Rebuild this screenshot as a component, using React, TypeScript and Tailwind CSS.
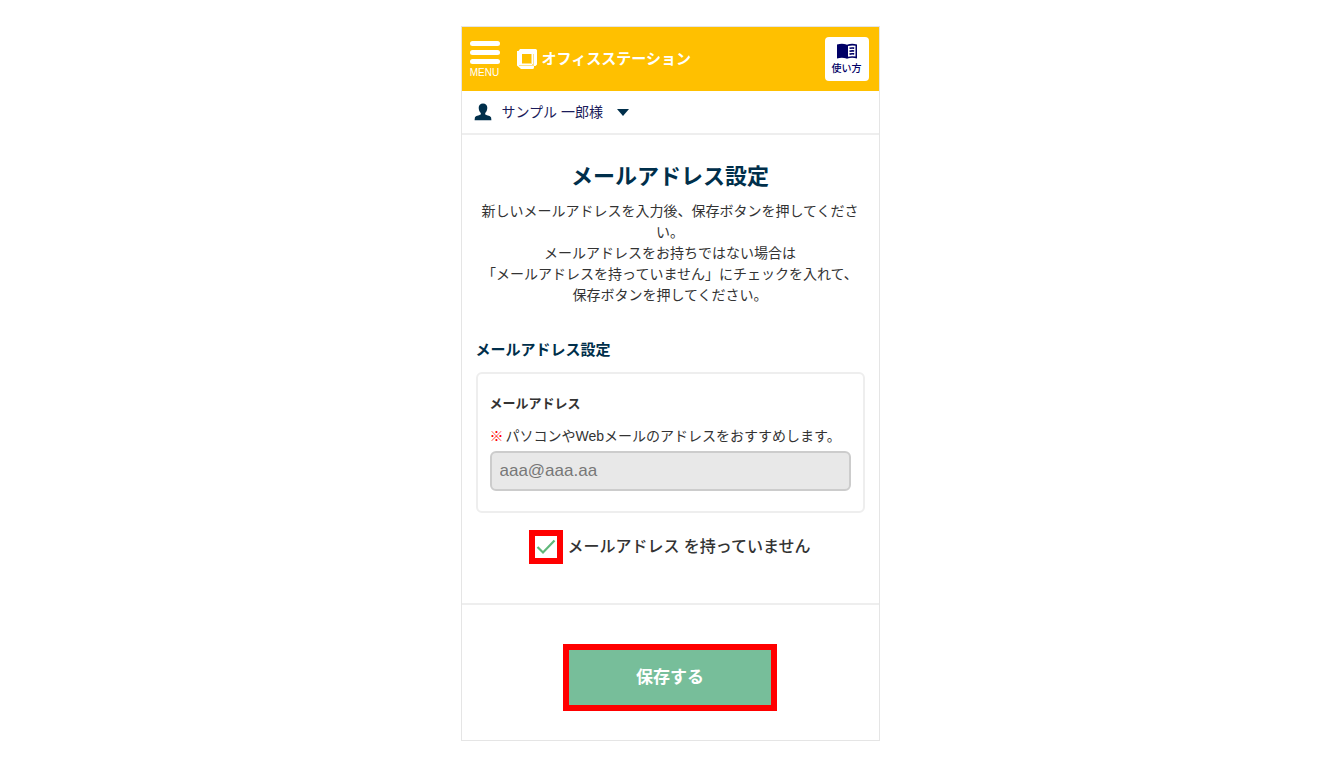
import React, { useState } from 'react';

const LogoMark: React.FC = () => (
  <svg viewBox="0 0 22 22" className="size-[22px]" aria-hidden="true">
    <path
      d="M4 1H19.500Q21 1 21 2.500V16.500L19.500 18H18V19.500Q18 21 16.500 21H5L1 17.500V3H2.500ZM6 6V15.500H15.500V6Z"
      fill="#fff"
      fillRule="evenodd"
    />
    <path d="M15.500 15.500L17.500 17.500M17.500 17.500V6M3 17.500H17.500" fill="none" stroke="#ffd659" strokeWidth="0.700" />
  </svg>
);

const BookIcon: React.FC = () => (
  <svg viewBox="0 0 22 17" className="h-[17px] w-[22px]" aria-hidden="true">
    <path d="M1 1.500Q6 0 10.500 1.500L11 2L11.500 1.500Q16 0 21 1.500V15.500Q16 14 11.500 15.500L11 16L10.500 15.500Q6 14 1 15.500ZM12 3V13.700Q15.500 12.700 19.500 13.500V2.700Q15.500 2 12 3Z" fill="#000066" fillRule="evenodd" />
    <path d="M13.500 5.300q2-.500 4.700-.200M13.500 8.200q2-.500 4.700-.200M13.500 11.100q2-.500 4.700-.200" fill="none" stroke="#000066" strokeWidth="1.600" />
  </svg>
);

const UserIcon: React.FC = () => (
  <svg viewBox="0 0 18 18" className="size-[18px]" aria-hidden="true">
    <path d="M9 0.500c2.700 0 4.300 1.700 4.300 4.300 0 2.200-.800 4.200-2.100 5.200v1.400c2 1 5.400 1.200 5.900 3.200l.300 2.600H.600l.300-2.600c.500-2 3.900-2.200 5.900-3.200V10c-1.300-1-2.100-3-2.100-5.200C4.700 2.200 6.300.5 9 .5Z" fill="#002f4b" />
  </svg>
);

const Header: React.FC = () => (
  <header className="flex h-16 items-center bg-[#ffc000] pr-2.5 pl-2">
    <button type="button" className="flex flex-col items-center text-white">
      <span className="flex flex-col gap-1">
        <span className="h-[5px] w-[30px] rounded-full bg-white" />
        <span className="h-[5px] w-[30px] rounded-full bg-white" />
        <span className="h-[5px] w-[30px] rounded-full bg-white" />
      </span>
      <span className="mt-1 text-[10px] leading-[10px]">MENU</span>
    </button>
    <a href="#" className="ml-4 flex items-center gap-1 text-[15px] leading-6 font-bold text-white">
      <LogoMark />
      オフィスステーション
    </a>
    <a href="#" className="ml-auto flex h-11 w-11 flex-col items-center justify-center gap-0.5 rounded bg-white text-[10px] leading-[14px] font-medium text-[#000066]">
      <BookIcon />
      使い方
    </a>
  </header>
);

const UserBar: React.FC = () => (
  <div className="flex h-11 items-center border-b-2 border-[#eeeeee] px-3">
    <button type="button" className="flex items-center gap-2.5 text-sm text-[#1b1b5a]">
      <UserIcon />
      <span>サンプル 一郎様</span>
      <svg viewBox="0 0 12 7" className="ml-1 h-[7px] w-3" aria-hidden="true">
        <path d="M0 0h12L6 7Z" fill="#002f4b" />
      </svg>
    </button>
  </div>
);

const App: React.FC = () => {
  const [noMail, setNoMail] = useState(true);
  const [mail, setMail] = useState('');

  return (
    <div className="min-h-screen bg-white pt-[26px] pr-1 pb-6 font-['Liberation_Sans','Noto_Sans_CJK_JP',sans-serif] text-[#333333]">
      <div className="mx-auto max-w-[419px] border border-[#e5e5e5]">
        <Header />
        <UserBar />
        <main>
          <form onSubmit={(e) => e.preventDefault()}>
            <div className="px-3.5 pt-[26px] pb-[39px]">
              <h1 className="text-center text-[22px] leading-8 font-bold text-[#002f4b]">メールアドレス設定</h1>
              <p className="mt-2 text-center text-sm leading-[21px]">
                新しいメールアドレスを入力後、保存ボタンを押してください。
                <br />
                メールアドレスをお持ちではない場合は
                <br />
                「メールアドレスを持っていません」にチェックを入れて、
                <br />
                保存ボタンを押してください。
              </p>

              <h2 className="mt-8 text-[15px] leading-6 font-bold text-[#002f4b]">メールアドレス設定</h2>
              <div className="mt-2.5 rounded-md border-2 border-[#eeeeee] px-3 pt-5 pb-5">
                <label htmlFor="mail" className="block text-[13px] leading-5 font-bold">メールアドレス</label>
                <p className="mt-3 text-sm leading-[21px]">
                  <span className="mr-0.5 font-bold text-[#ff0000]">※</span>
                  パソコンやWebメールのアドレスをおすすめします。
                </p>
                <input
                  id="mail"
                  type="email"
                  placeholder="aaa@aaa.aa"
                  value={mail}
                  disabled={noMail}
                  onChange={(e) => setMail(e.target.value)}
                  className="mt-1 block h-10 w-full rounded-md border-2 border-[#cccccc] px-2 text-[17px] placeholder:text-[#777777] disabled:bg-[#e8e8e8]"
                />
              </div>

              <label className="mt-[17px] flex items-center justify-center gap-1 text-base font-medium">
                <span className="grid size-[34px] place-items-center">
                  <input
                    type="checkbox"
                    checked={noMail}
                    onChange={(e) => setNoMail(e.target.checked)}
                    className="peer col-start-1 row-start-1 size-[34px] appearance-none border-6 border-[#ff0000] bg-white"
                  />
                  <svg viewBox="0 0 20 16" className="pointer-events-none invisible col-start-1 row-start-1 h-4 w-5 peer-checked:visible" aria-hidden="true">
                    <path d="M1.500 8l5.500 5.500L18.500 1.500" fill="none" stroke="#5fb87a" strokeWidth="2.200" />
                  </svg>
                </span>
                メールアドレス を持っていません
              </label>
            </div>

            <div className="flex justify-center border-t-2 border-[#eeeeee] pt-[39px] pb-[29px]">
              <button type="submit" className="h-[67px] w-[214px] border-6 border-[#ff0000] bg-[#77be9a] text-[17px] font-bold text-white">
                保存する
              </button>
            </div>
          </form>
        </main>
      </div>
    </div>
  );
};

export default App;
